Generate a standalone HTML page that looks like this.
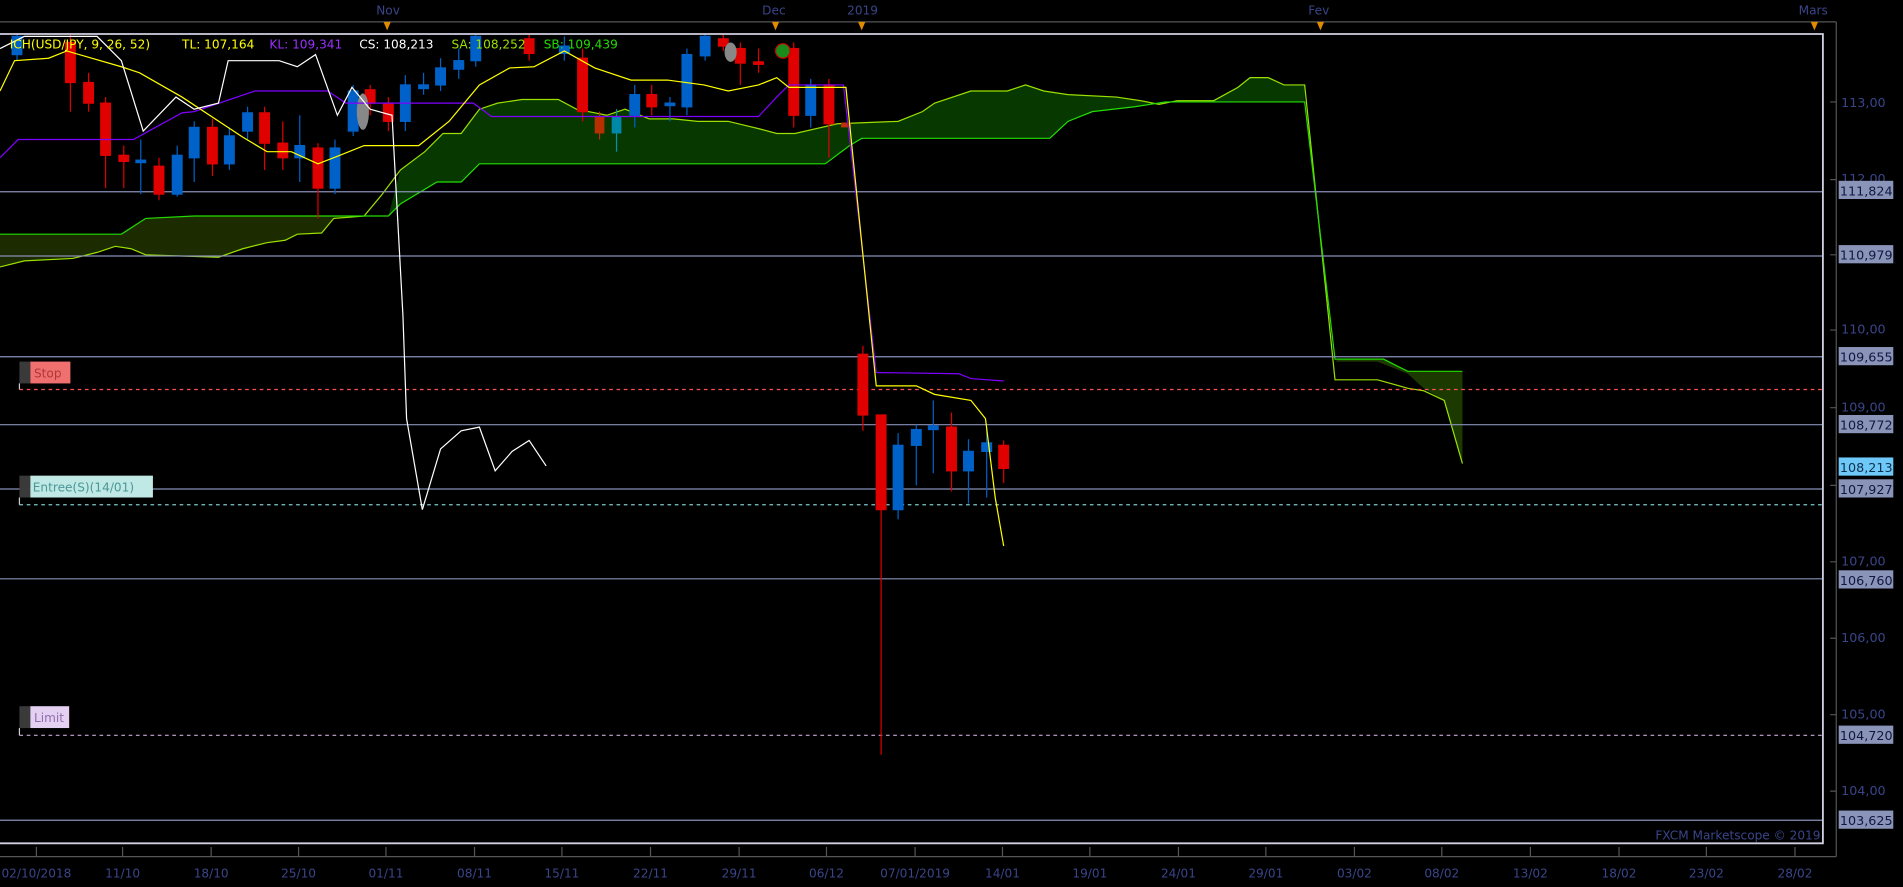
<!DOCTYPE html>
<html><head><meta charset="utf-8"><style>
html,body{margin:0;padding:0;background:#000;width:1903px;height:887px;overflow:hidden}
svg{display:block}
text{font-family:"DejaVu Sans","Liberation Sans",sans-serif}
</style></head><body>
<svg width="1903" height="887" viewBox="0 0 1568 731" preserveAspectRatio="none" xmlns="http://www.w3.org/2000/svg">
<rect width="1568" height="731" fill="#000"/>
<g font-size="10" fill="#3a4588">
<text x="310" y="12">Nov</text><text x="628" y="12">Dec</text><text x="698" y="12">2019</text><text x="1078" y="12">Fev</text><text x="1482" y="12">Mars</text>
</g>
<line x1="0" y1="18" x2="1513" y2="18" stroke="#555" stroke-width="1"/>
<g fill="#e08a00"><path d="M316 18l6 0-3 7z"/><path d="M636 18l6 0-3 7z"/><path d="M707 18l6 0-3 7z"/><path d="M1085 18l6 0-3 7z"/><path d="M1492 18l6 0-3 7z"/></g>
<polygon fill="#1c2c00" points="0,220 20,215 60,213 80,208 95,203 108,205 120,210 180,212 200,205 220,200 235,198 245,193 265,192 275,180 300,178 320,178 300,178 160,178 120,180 100,193 0,193"/>
<polygon fill="#063800" points="320,178 330,140 350,125 365,110 380,110 395,90 410,85 430,82 460,82 475,90 500,95 515,90 535,98 555,98 575,100 600,100 625,106 640,110 655,110 690,102 740,100 760,92 770,85 800,75 830,75 845,70 860,75 880,78 920,80 940,83 955,86 970,83 1000,83 1020,72 1030,64 1045,64 1058,70 1075,70 1075,84 960,84 935,88 900,92 880,100 865,114 710,114 700,120 680,135 410,135 395,135 380,150 360,150 330,168"/>
<polygon fill="#1c3a00" points="1100,298 1135,298 1160,308 1173,320 1190,330 1205,382 1205,306 1160,306 1140,296 1103,296"/>
<polyline fill="none" stroke="#9be000" stroke-width="1" points="0,220 20,215 60,213 80,208 95,203 108,205 120,210 180,212 200,205 220,200 235,198 245,193 265,192 275,180 300,178 315,160 330,140 350,125 365,110 380,110 395,90 410,85 430,82 460,82 475,90 500,95 515,90 535,98 555,98 575,100 600,100 625,106 640,110 655,110 690,102 740,100 760,92 770,85 800,75 830,75 845,70 860,75 880,78 920,80 940,83 955,86 970,83 1000,83 1020,72 1030,64 1045,64 1058,70 1075,70 1100,313 1135,313 1160,320 1173,322 1190,330 1205,382"/>
<polyline fill="none" stroke="#22dd00" stroke-width="1" points="0,193 100,193 120,180 160,178 320,178 330,168 360,150 380,150 395,135 680,135 700,120 710,114 865,114 880,100 900,92 935,88 960,84 1075,84 1100,296 1140,296 1160,306 1205,306"/>
<g stroke="#8890b8" stroke-width="1">
<line x1="0" y1="158" x2="1502" y2="158"/><line x1="0" y1="211" x2="1502" y2="211"/><line x1="0" y1="294" x2="1502" y2="294"/><line x1="0" y1="350" x2="1502" y2="350"/><line x1="0" y1="403" x2="1502" y2="403"/><line x1="0" y1="477" x2="1502" y2="477"/><line x1="0" y1="676" x2="1502" y2="676"/>
</g>
<line x1="16" y1="321" x2="1502" y2="321" stroke="#ff5050" stroke-dasharray="3,3"/>
<line x1="16" y1="416" x2="1502" y2="416" stroke="#80c8c8" stroke-dasharray="3,3"/>
<line x1="16" y1="606" x2="1502" y2="606" stroke="#c8a8d8" stroke-dasharray="3,3"/>
<g stroke-width="1">
<g fill="#e00000" stroke="#e00000">
<line x1="58" y1="28" x2="58" y2="92"/><rect x="54" y="35" width="8" height="33"/>
<line x1="73" y1="60" x2="73" y2="92"/><rect x="69" y="68" width="8" height="17"/>
<line x1="87" y1="80" x2="87" y2="155"/><rect x="83" y="85" width="8" height="43"/>
<line x1="102" y1="120" x2="102" y2="155"/><rect x="98" y="128" width="8" height="5"/>
<line x1="131" y1="130" x2="131" y2="165"/><rect x="127" y="137" width="8" height="23"/>
<line x1="175" y1="98" x2="175" y2="145"/><rect x="171" y="105" width="8" height="30"/>
<line x1="218" y1="88" x2="218" y2="140"/><rect x="214" y="93" width="8" height="25"/>
<line x1="233" y1="100" x2="233" y2="140"/><rect x="229" y="118" width="8" height="12"/>
<line x1="262" y1="118" x2="262" y2="180"/><rect x="258" y="122" width="8" height="33"/>
<line x1="305" y1="70" x2="305" y2="95"/><rect x="301" y="74" width="8" height="11"/>
<line x1="320" y1="80" x2="320" y2="108"/><rect x="316" y="85" width="8" height="15"/>
<line x1="436" y1="28" x2="436" y2="50"/><rect x="432" y="32" width="8" height="12"/>
<line x1="480" y1="40" x2="480" y2="100"/><rect x="476" y="48" width="8" height="44"/>
<line x1="537" y1="70" x2="537" y2="95"/><rect x="533" y="78" width="8" height="10"/>
<line x1="596" y1="28" x2="596" y2="42"/><rect x="592" y="32" width="8" height="6"/>
<line x1="610" y1="35" x2="610" y2="70"/><rect x="606" y="40" width="8" height="12"/>
<line x1="625" y1="40" x2="625" y2="60"/><rect x="621" y="51" width="8" height="2"/>
<line x1="654" y1="35" x2="654" y2="105"/><rect x="650" y="40" width="8" height="55"/>
<line x1="683" y1="65" x2="683" y2="130"/><rect x="679" y="70" width="8" height="32"/>
<line x1="711" y1="285" x2="711" y2="355"/><rect x="707" y="292" width="8" height="50"/>
<line x1="726" y1="342" x2="726" y2="622"/><rect x="722" y="342" width="8" height="78"/>
<line x1="784" y1="340" x2="784" y2="405"/><rect x="780" y="352" width="8" height="36"/>
<line x1="827" y1="363" x2="827" y2="398"/><rect x="823" y="367" width="8" height="19"/>
</g>
<g fill="#0062c8" stroke="#0062c8">
<line x1="14" y1="28" x2="14" y2="50"/><rect x="10" y="30" width="8" height="15"/>
<line x1="116" y1="115" x2="116" y2="160"/><rect x="112" y="132" width="8" height="2"/>
<line x1="146" y1="120" x2="146" y2="162"/><rect x="142" y="128" width="8" height="32"/>
<line x1="160" y1="100" x2="160" y2="150"/><rect x="156" y="105" width="8" height="25"/>
<line x1="189" y1="105" x2="189" y2="140"/><rect x="185" y="112" width="8" height="23"/>
<line x1="204" y1="88" x2="204" y2="115"/><rect x="200" y="93" width="8" height="15"/>
<line x1="247" y1="95" x2="247" y2="150"/><rect x="243" y="120" width="8" height="10"/>
<line x1="276" y1="115" x2="276" y2="160"/><rect x="272" y="122" width="8" height="33"/>
<line x1="291" y1="70" x2="291" y2="112"/><rect x="287" y="75" width="8" height="33"/>
<line x1="334" y1="62" x2="334" y2="108"/><rect x="330" y="70" width="8" height="30"/>
<line x1="349" y1="60" x2="349" y2="78"/><rect x="345" y="70" width="8" height="3"/>
<line x1="363" y1="48" x2="363" y2="75"/><rect x="359" y="56" width="8" height="14"/>
<line x1="378" y1="40" x2="378" y2="65"/><rect x="374" y="50" width="8" height="7"/>
<line x1="392" y1="28" x2="392" y2="55"/><rect x="388" y="30" width="8" height="20"/>
<line x1="465" y1="30" x2="465" y2="50"/><rect x="461" y="38" width="8" height="6"/>
<line x1="523" y1="70" x2="523" y2="105"/><rect x="519" y="78" width="8" height="17"/>
<line x1="552" y1="80" x2="552" y2="100"/><rect x="548" y="85" width="8" height="2"/>
<line x1="566" y1="40" x2="566" y2="95"/><rect x="562" y="45" width="8" height="43"/>
<line x1="581" y1="28" x2="581" y2="50"/><rect x="577" y="30" width="8" height="16"/>
<line x1="668" y1="65" x2="668" y2="105"/><rect x="664" y="70" width="8" height="25"/>
<line x1="740" y1="357" x2="740" y2="428"/><rect x="736" y="367" width="8" height="53"/>
<line x1="755" y1="350" x2="755" y2="400"/><rect x="751" y="354" width="8" height="13"/>
<line x1="769" y1="330" x2="769" y2="390"/><rect x="765" y="351" width="8" height="3"/>
<line x1="798" y1="362" x2="798" y2="415"/><rect x="794" y="372" width="8" height="16"/>
<line x1="813" y1="352" x2="813" y2="410"/><rect x="809" y="365" width="8" height="7"/>
</g>
<line x1="494" y1="92" x2="494" y2="115" stroke="#c03000"/><rect x="490" y="96" width="8" height="14" fill="#b83000"/>
<line x1="508" y1="90" x2="508" y2="125" stroke="#0090b0"/><rect x="504" y="96" width="8" height="14" fill="#0088a8"/>
<rect x="693" y="101" width="8" height="4" fill="#c03000"/>
</g>
<ellipse cx="299" cy="92" rx="5" ry="15" fill="#888"/>
<ellipse cx="602" cy="43" rx="5" ry="8" fill="#888"/>
<circle cx="645" cy="42" r="6" fill="#1a8a1a" stroke="#c00" stroke-width="1"/>
<polyline fill="none" stroke="#8000ff" stroke-width="1" points="0,130 15,115 110,115 128,105 150,93 160,92 210,75 270,75 285,85 300,85 390,85 405,96 625,96 640,80 650,70 695,70 722,307 790,308 800,312 827,314"/>
<polyline fill="none" stroke="#ffff00" stroke-width="1" points="0,75 12,50 40,48 55,42 100,55 115,60 150,80 200,113 220,125 240,125 262,135 280,128 300,120 345,120 370,100 395,70 420,56 440,55 465,42 490,56 520,66 550,66 580,70 600,75 625,70 640,64 650,72 697,72 722,318 755,318 770,325 800,330 812,345 820,410 827,450"/>
<polyline fill="none" stroke="#ffffff" stroke-width="1" points="0,40 20,30 80,30 100,50 118,108 145,80 160,90 180,85 188,50 230,50 245,55 260,45 278,95 290,72 305,90 323,95 332,260 335,345 348,420 363,370 380,355 395,352 408,388 422,372 436,363 450,384"/>
<g font-size="10">
<text x="8" y="40" fill="#ffff00">ICH(USD/JPY, 9, 26, 52)</text>
<text x="150" y="40" fill="#ffff00">TL: 107,164</text>
<text x="222" y="40" fill="#9a30ff">KL: 109,341</text>
<text x="296" y="40" fill="#ffffff">CS: 108,213</text>
<text x="372" y="40" fill="#9be000">SA: 108,252</text>
<text x="448" y="40" fill="#22dd00">SB: 109,439</text>
</g>
<g font-size="10">
<rect x="16" y="298" width="9" height="18" fill="#3a3a3a"/><rect x="25" y="298" width="33" height="18" fill="#f07070"/><text x="28" y="311" fill="#b03838">Stop</text>
<polyline points="16,316 16,321" stroke="#ccc" fill="none"/>
<rect x="16" y="392" width="9" height="18" fill="#3a3a3a"/><rect x="25" y="392" width="101" height="18" fill="#c0e8e4"/><text x="27" y="405" fill="#4a9898">Entree(S)(14/01)</text>
<polyline points="16,410 16,416" stroke="#ccc" fill="none"/>
<rect x="16" y="582" width="9" height="18" fill="#3a3a3a"/><rect x="25" y="582" width="32" height="18" fill="#e4d0f0"/><text x="28" y="595" fill="#9070b0">Limit</text>
<polyline points="16,600 16,606" stroke="#ccc" fill="none"/>
</g>
<polyline points="0,28 1502,28 1502,695 0,695" fill="none" stroke="#d0d0e0" stroke-width="1.5"/>
<line x1="1513" y1="18" x2="1513" y2="706" stroke="#555"/>
<g stroke="#555"><path d="M1508 84h5M1508 148h5M1508 210h5M1508 272h5M1508 336h5M1508 400h5M1508 463h5M1508 526h5M1508 589h5M1508 652h5"/></g>
<g font-size="10.5" fill="#3a4588">
<text x="1517" y="88">113,00</text><text x="1517" y="151">112,00</text><text x="1517" y="275">110,00</text><text x="1517" y="339">109,00</text><text x="1517" y="466">107,00</text><text x="1517" y="529">106,00</text><text x="1517" y="592">105,00</text><text x="1517" y="655">104,00</text>
</g>
<g font-size="10.5">
<rect x="1515" y="149" width="45" height="15" fill="#8a94b8"/><text x="1516" y="161" fill="#101840">111,824</text>
<rect x="1515" y="202" width="45" height="15" fill="#8a94b8"/><text x="1516" y="214" fill="#101840">110,979</text>
<rect x="1515" y="286" width="45" height="15" fill="#8a94b8"/><text x="1516" y="298" fill="#101840">109,655</text>
<rect x="1515" y="342" width="45" height="15" fill="#8a94b8"/><text x="1516" y="354" fill="#101840">108,772</text>
<rect x="1515" y="377" width="45" height="15" fill="#6ec8f8"/><text x="1516" y="389" fill="#103050">108,213</text>
<rect x="1515" y="395" width="45" height="15" fill="#8a94b8"/><text x="1516" y="407" fill="#101840">107,927</text>
<rect x="1515" y="470" width="45" height="15" fill="#8a94b8"/><text x="1516" y="482" fill="#101840">106,760</text>
<rect x="1515" y="598" width="45" height="15" fill="#8a94b8"/><text x="1516" y="610" fill="#101840">104,720</text>
<rect x="1515" y="668" width="45" height="15" fill="#8a94b8"/><text x="1516" y="680" fill="#101840">103,625</text>
</g>
<text x="1500" y="692" font-size="10" fill="#3a4588" text-anchor="end">FXCM Marketscope © 2019</text>
<line x1="0" y1="706" x2="1513" y2="706" stroke="#555"/>
<g font-size="10" fill="#3a4588" text-anchor="middle">
<text x="30" y="723">02/10/2018</text><text x="101" y="723">11/10</text><text x="174" y="723">18/10</text><text x="246" y="723">25/10</text><text x="318" y="723">01/11</text><text x="391" y="723">08/11</text><text x="463" y="723">15/11</text><text x="536" y="723">22/11</text><text x="609" y="723">29/11</text><text x="681" y="723">06/12</text><text x="754" y="723">07/01/2019</text><text x="826" y="723">14/01</text><text x="898" y="723">19/01</text><text x="971" y="723">24/01</text><text x="1043" y="723">29/01</text><text x="1116" y="723">03/02</text><text x="1188" y="723">08/02</text><text x="1261" y="723">13/02</text><text x="1334" y="723">18/02</text><text x="1406" y="723">23/02</text><text x="1479" y="723">28/02</text>
</g>
<g stroke="#555"><path d="M30 698v8M101 698v8M174 698v8M246 698v8M318 698v8M391 698v8M463 698v8M536 698v8M609 698v8M681 698v8M754 698v8M826 698v8M898 698v8M971 698v8M1043 698v8M1116 698v8M1188 698v8M1261 698v8M1334 698v8M1406 698v8M1479 698v8"/></g>
</svg>
</body></html>
